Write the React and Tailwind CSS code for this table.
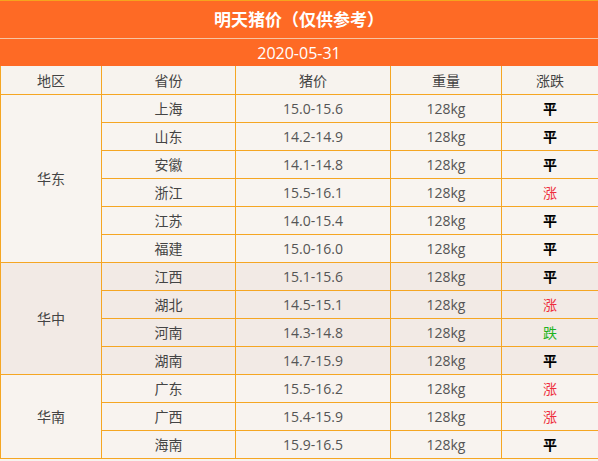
const groups = [
  {
    name: '华东',
    bg: 'bg-[#f8f4f0]',
    rows: [
      ['上海', '15.0-15.6', '平'],
      ['山东', '14.2-14.9', '平'],
      ['安徽', '14.1-14.8', '平'],
      ['浙江', '15.5-16.1', '涨'],
      ['江苏', '14.0-15.4', '平'],
      ['福建', '15.0-16.0', '平'],
    ],
  },
  {
    name: '华中',
    bg: 'bg-[#f2eae5]',
    rows: [
      ['江西', '15.1-15.6', '平'],
      ['湖北', '14.5-15.1', '涨'],
      ['河南', '14.3-14.8', '跌'],
      ['湖南', '14.7-15.9', '平'],
    ],
  },
  {
    name: '华南',
    bg: 'bg-[#f8f3ef]',
    rows: [
      ['广东', '15.5-16.2', '涨'],
      ['广西', '15.4-15.9', '涨'],
      ['海南', '15.9-16.5', '平'],
    ],
  },
]

const trendClass = {
  平: 'text-black font-bold',
  涨: 'text-[#ee2f3d]',
  跌: 'text-[#1fb31f]',
}

export default function App() {
  const cells = []
  let rowStart = 2
  groups.forEach((g) => {
    cells.push(
      <div
        key={g.name}
        className={`${g.bg} flex items-center justify-center text-[#444]`}
        style={{ gridColumn: 1, gridRow: `${rowStart} / span ${g.rows.length}` }}
      >
        {g.name}
      </div>
    )
    g.rows.forEach((r, i) => {
      const row = rowStart + i
      const cls = `${g.bg} flex items-center justify-center`
      cells.push(
        <div key={r[0]} className={`${cls} text-[#444]`} style={{ gridColumn: 2, gridRow: row }}>
          {r[0]}
        </div>,
        <div key={r[0] + 'p'} className={`${cls} text-[#555]`} style={{ gridColumn: 3, gridRow: row }}>
          {r[1]}
        </div>,
        <div key={r[0] + 'w'} className={`${cls} text-[#555]`} style={{ gridColumn: 4, gridRow: row }}>
          128kg
        </div>,
        <div key={r[0] + 't'} className={`${cls} ${trendClass[r[2]]}`} style={{ gridColumn: 5, gridRow: row }}>
          {r[2]}
        </div>
      )
    })
    rowStart += g.rows.length
  })

  return (
    <div
      className="w-[598px] h-[461px] overflow-hidden bg-[#f8f3ef] text-[14px]"
      style={{ fontFamily: '"Open Sans", "Noto Sans CJK SC", sans-serif' }}
    >
      <div className="border-t border-[#f5a41e]">
        <div className="h-[37px] bg-[#fe6a25] flex items-center justify-center text-white font-bold text-[17px]">
          明天猪价（仅供参考）
        </div>
        <div className="h-px bg-[#f6c4a4]"></div>
        <div className="h-[27px] bg-[#fe6a25] flex items-center justify-center text-white text-[16px]">
          2020-05-31
        </div>
      </div>
      <div className="grid grid-cols-[100px_133px_154px_110px_96px] grid-rows-[28px_repeat(13,27px)] gap-px bg-[#f5a623] pl-px pb-px">
        {['地区', '省份', '猪价', '重量', '涨跌'].map((h) => (
          <div key={h} className="bg-[#f7f3ee] flex items-center justify-center text-[#444]">
            {h}
          </div>
        ))}
        {cells}
      </div>
    </div>
  )
}
